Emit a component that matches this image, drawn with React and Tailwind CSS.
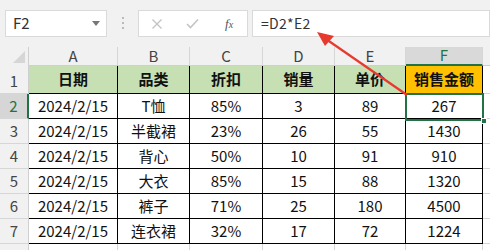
const cols = [
  { key: 'A', w: 89 },
  { key: 'B', w: 72 },
  { key: 'C', w: 73 },
  { key: 'D', w: 72 },
  { key: 'E', w: 71 },
  { key: 'F', w: 77 },
]

const head = ['日期', '品类', '折扣', '销量', '单价', '销售金额']

const rows = [
  ['2024/2/15', 'T恤', '85%', '3', '89', '267'],
  ['2024/2/15', '半截裙', '23%', '26', '55', '1430'],
  ['2024/2/15', '背心', '50%', '10', '91', '910'],
  ['2024/2/15', '大衣', '85%', '15', '88', '1320'],
  ['2024/2/15', '裤子', '71%', '25', '180', '4500'],
  ['2024/2/15', '连衣裙', '32%', '17', '72', '1224'],
]

const font = { fontFamily: '"Noto Sans CJK SC", "Noto Sans", sans-serif' }

function Toolbar() {
  return (
    <div className="h-[47px] bg-[#f1f1f1] flex items-start pt-[10px] pl-[5px]">
      <div className="w-[102px] h-[27px] bg-white border border-[#dadada] flex items-center justify-between pl-[7px] pr-[6px]">
        <span className="text-[15px] text-[#333]">F2</span>
        <span className="w-0 h-0 border-l-[4px] border-r-[4px] border-t-[5px] border-l-transparent border-r-transparent border-t-[#777]" />
      </div>
      <div className="w-[31px] flex flex-col items-center gap-[3px] pt-[7px]">
        <span className="w-[2px] h-[2px] bg-[#bbb]" />
        <span className="w-[2px] h-[2px] bg-[#bbb]" />
        <span className="w-[2px] h-[2px] bg-[#bbb]" />
      </div>
      <div className="w-[110px] h-[27px] bg-white border border-[#dadada] flex items-center pl-[12px]">
        <svg width="12" height="12" viewBox="0 0 12 12" className="mr-[23px]">
          <path d="M1.5 1.5 L10.5 10.5 M10.5 1.5 L1.5 10.5" stroke="#c4c4c4" strokeWidth="1.4" />
        </svg>
        <svg width="13" height="11" viewBox="0 0 13 11" className="mr-[26px]">
          <path d="M1 6 L4.5 9.5 L12 1.5" stroke="#c4c4c4" strokeWidth="1.6" fill="none" />
        </svg>
        <span className="text-[13px] italic text-[#555]" style={{ fontFamily: '"Liberation Serif", serif' }}>
          f<span className="text-[10px]">x</span>
        </span>
      </div>
      <div className="ml-[4px] flex-1 h-[27px] bg-white border border-[#dadada] flex items-center pl-[8px]">
        <span className="text-[14px] text-[#333] tracking-[0.3px]">=D2*E2</span>
      </div>
    </div>
  )
}

function ColumnHeaders() {
  return (
    <div className="flex h-[19px] bg-[#f1f1f1]">
      <div className="w-[29px] relative border-r border-[#cfcfcf]">
        <svg width="13" height="12" viewBox="0 0 13 12" className="absolute right-[2px] bottom-[3px]">
          <path d="M12 0 L12 12 L0 12 Z" fill="#d6d6d6" />
        </svg>
      </div>
      {cols.map(c => (
        <div
          key={c.key}
          style={{ width: c.w }}
          className={`flex items-center justify-center text-[15px] text-[#444] border-r border-[#d6d6d6] ${
            c.key === 'F' ? 'bg-[#d9d9d9] border-b-2 border-b-[#217346] text-[#217346]' : 'border-b border-b-[#cfcfcf]'
          }`}
        >
          {c.key}
        </div>
      ))}
      <div className="flex-1 border-b border-[#cfcfcf]" />
    </div>
  )
}

function RowHead({ n, h, active }) {
  return (
    <div
      style={{ height: h }}
      className={`w-[29px] flex items-end justify-center pb-[1px] text-[15px] border-b border-[#d6d6d6] ${
        active ? 'bg-[#d6d6d6] border-r-2 border-r-[#217346] text-[#217346]' : 'bg-[#f1f1f1] border-r border-r-[#cfcfcf] text-[#444]'
      }`}
    >
      {n}
    </div>
  )
}

export default function App() {
  return (
    <div className="w-[490px] h-[250px] overflow-hidden bg-white relative" style={font}>
      <Toolbar />
      <ColumnHeaders />

      <div className="flex">
        <RowHead n={1} h={28} />
        {head.map((t, i) => (
          <div
            key={t}
            style={{ width: cols[i].w }}
            className={`h-[28px] flex items-center justify-center text-[15px] font-bold text-[#111] border-r border-b border-black ${
              i === 5 ? 'bg-[#ffc000]' : 'bg-[#c6e0b4]'
            }`}
          >
            {t}
          </div>
        ))}
        <div className="flex-1 border-b border-[#d6d6d6]" />
      </div>

      {rows.map((r, ri) => (
        <div key={ri} className="flex">
          <RowHead n={ri + 2} h={25} active={ri === 0} />
          {r.map((v, ci) => (
            <div
              key={ci}
              style={{ width: cols[ci].w }}
              className="h-[25px] flex items-center justify-center text-[15px] text-[#111] border-r border-b border-black"
            >
              {v}
            </div>
          ))}
          <div className="flex-1 border-b border-[#d6d6d6]" />
        </div>
      ))}

      {/* row 8, only its top edge shows */}
      <div className="flex">
        <RowHead h={25} />
        {cols.map(c => (
          <div key={c.key} style={{ width: c.w }} className="h-[25px] border-r border-[#d6d6d6]" />
        ))}
      </div>

      {/* active cell frame on F2 */}
      <div className="absolute left-[405px] top-[93px] w-[79px] h-[28px] border-2 border-[#217346] pointer-events-none" />
      <div className="absolute left-[481px] top-[118px] w-[6px] h-[6px] bg-[#217346] border border-white" />

      {/* red pointer from the F column to the formula bar */}
      <svg className="absolute left-0 top-0 pointer-events-none" width="490" height="250">
        <line x1="407" y1="95" x2="323" y2="37" stroke="#e8392f" strokeWidth="2.2" />
        <path d="M317 32 L334 36 L325 46 Z" fill="#e8392f" />
      </svg>
    </div>
  )
}
